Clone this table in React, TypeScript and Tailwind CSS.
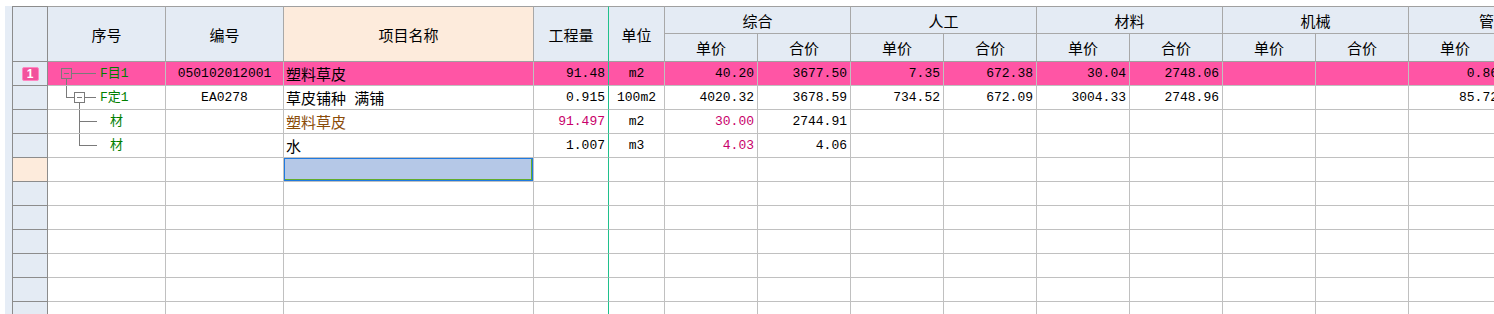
const cjk = "font-['Noto_Sans_CJK_SC',sans-serif] text-[15px] leading-none";
const mono = "font-['Liberation_Mono','Noto_Sans_CJK_SC',monospace] text-[13px] leading-none";

const MAGENTA = 'text-[#c8006a]';
const BROWN = 'text-[#8a4b08]';
const GREEN = 'text-[#008000]';

type Price = { v: string; c?: string };

type Row = {
    pink?: boolean;
    badge?: string;
    current?: boolean;
    tree?: 1 | 2 | 3 | 4;
    xh?: string;
    bh?: string;
    mc?: string;
    mcColor?: string;
    gcl?: string;
    gclColor?: string;
    dw?: string;
    prices?: Price[];
    selected?: boolean;
};

const groups = ['综合', '人工', '材料', '机械', '管理费'];

const rows: Row[] = [
    {
        pink: true, badge: '1', tree: 1, xh: 'F目1', bh: '050102012001', mc: '塑料草皮', gcl: '91.48', dw: 'm2',
        prices: [{ v: '40.20' }, { v: '3677.50' }, { v: '7.35' }, { v: '672.38' }, { v: '30.04' }, { v: '2748.06' }, { v: '' }, { v: '' }, { v: '0.86' }, { v: '' }],
    },
    {
        tree: 2, xh: 'F定1', bh: 'EA0278', mc: '草皮铺种 满铺', gcl: '0.915', dw: '100m2',
        prices: [{ v: '4020.32' }, { v: '3678.59' }, { v: '734.52' }, { v: '672.09' }, { v: '3004.33' }, { v: '2748.96' }, { v: '' }, { v: '' }, { v: '85.72' }, { v: '' }],
    },
    {
        tree: 3, xh: '材', mc: '塑料草皮', mcColor: BROWN, gcl: '91.497', gclColor: MAGENTA, dw: 'm2',
        prices: [{ v: '30.00', c: MAGENTA }, { v: '2744.91' }],
    },
    {
        tree: 4, xh: '材', mc: '水', gcl: '1.007', dw: 'm3',
        prices: [{ v: '4.03', c: MAGENTA }, { v: '4.06' }],
    },
    { current: true, selected: true },
    {}, {}, {}, {}, {}, {},
];

// tree connector lines in the 序号 column
function Tree({ kind }: { kind: 1 | 2 | 3 | 4 }) {
    const w = kind <= 2 ? 52 : 62;
    const s = '#7a7a7a';
    return (
        <svg width={w} height={23} className="flex-none" shapeRendering="crispEdges">
            {kind === 1 && (
                <g stroke={s} fill="none">
                    <rect x={13.5} y={6.5} width={10} height={10} />
                    <line x1={16} y1={11.5} x2={21} y2={11.5} />
                    <line x1={24} y1={11.5} x2={48} y2={11.5} />
                    <line x1={18.5} y1={17} x2={18.5} y2={23} />
                </g>
            )}
            {kind === 2 && (
                <g stroke={s} fill="none">
                    <line x1={18.5} y1={0} x2={18.5} y2={11.5} />
                    <line x1={18.5} y1={11.5} x2={26} y2={11.5} />
                    <rect x={26.5} y={6.5} width={10} height={10} />
                    <line x1={29} y1={11.5} x2={34} y2={11.5} />
                    <line x1={37} y1={11.5} x2={48} y2={11.5} />
                    <line x1={31.5} y1={17} x2={31.5} y2={23} />
                </g>
            )}
            {kind === 3 && (
                <g stroke={s} fill="none">
                    <line x1={31.5} y1={0} x2={31.5} y2={23} />
                    <line x1={31.5} y1={11.5} x2={49} y2={11.5} />
                </g>
            )}
            {kind === 4 && (
                <g stroke={s} fill="none">
                    <line x1={31.5} y1={0} x2={31.5} y2={11.5} />
                    <line x1={31.5} y1={11.5} x2={49} y2={11.5} />
                </g>
            )}
        </svg>
    );
}

function HeaderCell({ w, label, peach, green }: { w: string; label: string; peach?: boolean; green?: boolean }) {
    return (
        <div
            className={`${w} h-[56px] flex-none flex items-center justify-center border-t border-b border-r border-t-[#a0a0a0] border-b-[#a0a0a0] ${green ? 'border-r-[#1fc08c]' : 'border-r-[#a8a8a8]'} ${peach ? 'bg-[#fdebdc]' : 'bg-[#e4ebf4]'} ${cjk} text-black`}
        >
            {label}
        </div>
    );
}

function BodyRow({ row }: { row: Row }) {
    const bg = row.pink ? 'bg-[#ff55a5]' : 'bg-white';
    const cell = `h-[24px] flex-none flex items-center border-b border-r border-[#c0c0c0] ${bg}`;
    const prices = row.prices ?? [];
    return (
        <div className="flex">
            {/* row header */}
            <div
                className={`w-[36px] h-[24px] flex-none flex items-center justify-center border-l border-r border-b border-[#8c8c8c] ${row.current ? 'bg-[#fdebdc]' : 'bg-[#e4ebf4]'}`}
            >
                {row.badge && (
                    <div className="w-[17px] h-[14px] rounded-[2px] bg-[#f2529c] border border-[#ff86c2] flex items-center justify-center text-white text-[12px] font-bold font-['Liberation_Sans',sans-serif] leading-none">
                        {row.badge}
                    </div>
                )}
            </div>
            {/* 序号 */}
            <div className={`${cell} w-[118px]`}>
                {row.tree && <Tree kind={row.tree} />}
                {row.xh && <span className={`${mono} ${GREEN}`}>{row.xh}</span>}
            </div>
            {/* 编号 */}
            <div className={`${cell} w-[118px] justify-center ${mono} text-black`}>{row.bh}</div>
            {/* 项目名称 */}
            <div className={`${cell} w-[250px]`}>
                {row.selected ? (
                    <div className="w-full h-full bg-[#b5c8e7] border border-[#1f7ae0] shadow-[inset_-1px_-1px_0_#62ad2c]" />
                ) : (
                    <span className={`${cjk} pl-[2px] [word-spacing:5px] ${row.mcColor ?? 'text-black'}`}>{row.mc}</span>
                )}
            </div>
            {/* 工程量 */}
            <div
                className={`h-[24px] flex-none flex items-center justify-end pr-[3px] border-b border-r border-b-[#c0c0c0] border-r-[#1fc08c] ${bg} w-[75px] ${mono} ${row.gclColor ?? 'text-black'}`}
            >
                {row.gcl}
            </div>
            {/* 单位 */}
            <div className={`${cell} w-[56px] justify-center ${mono} text-black`}>{row.dw}</div>
            {Array.from({ length: 10 }).map((_, i) => (
                <div
                    key={i}
                    className={`${cell} w-[93px] justify-end pr-[3px] ${mono} ${prices[i]?.c ?? 'text-black'}`}
                >
                    {prices[i]?.v}
                </div>
            ))}
        </div>
    );
}

export default function App() {
    return (
        <div className="w-[1494px] h-[314px] overflow-hidden bg-white flex">
            {/* left gutter strip */}
            <div className="w-[12px] flex-none pt-[6px] flex">
                <div className="w-[5px] bg-white" />
                <div className="w-[7px] bg-[#e6edf6]" />
            </div>

            <div className="flex-1 min-w-0 pt-[6px]">
                {/* header */}
                <div className="flex">
                    <div className="w-[36px] h-[56px] flex-none border-t border-l border-r border-b border-[#8c8c8c] bg-[#e4ebf4]" />
                    <HeaderCell w="w-[118px]" label="序号" />
                    <HeaderCell w="w-[118px]" label="编号" />
                    <HeaderCell w="w-[250px]" label="项目名称" peach />
                    <HeaderCell w="w-[75px]" label="工程量" green />
                    <HeaderCell w="w-[56px]" label="单位" />
                    {groups.map((g) => (
                        <div key={g} className="w-[186px] flex-none flex flex-col">
                            <div className={`h-[28px] flex items-center justify-center border-t border-b border-r border-[#a8a8a8] border-t-[#a0a0a0] bg-[#e4ebf4] ${cjk} text-black`}>
                                {g}
                            </div>
                            <div className="flex">
                                {['单价', '合价'].map((s) => (
                                    <div
                                        key={s}
                                        className={`w-[93px] h-[28px] flex-none flex items-center justify-center border-b border-r border-[#a8a8a8] border-b-[#a0a0a0] bg-[#e4ebf4] ${cjk} text-black`}
                                    >
                                        {s}
                                    </div>
                                ))}
                            </div>
                        </div>
                    ))}
                </div>

                {/* body */}
                {rows.map((r, i) => (
                    <BodyRow key={i} row={r} />
                ))}
            </div>
        </div>
    );
}
